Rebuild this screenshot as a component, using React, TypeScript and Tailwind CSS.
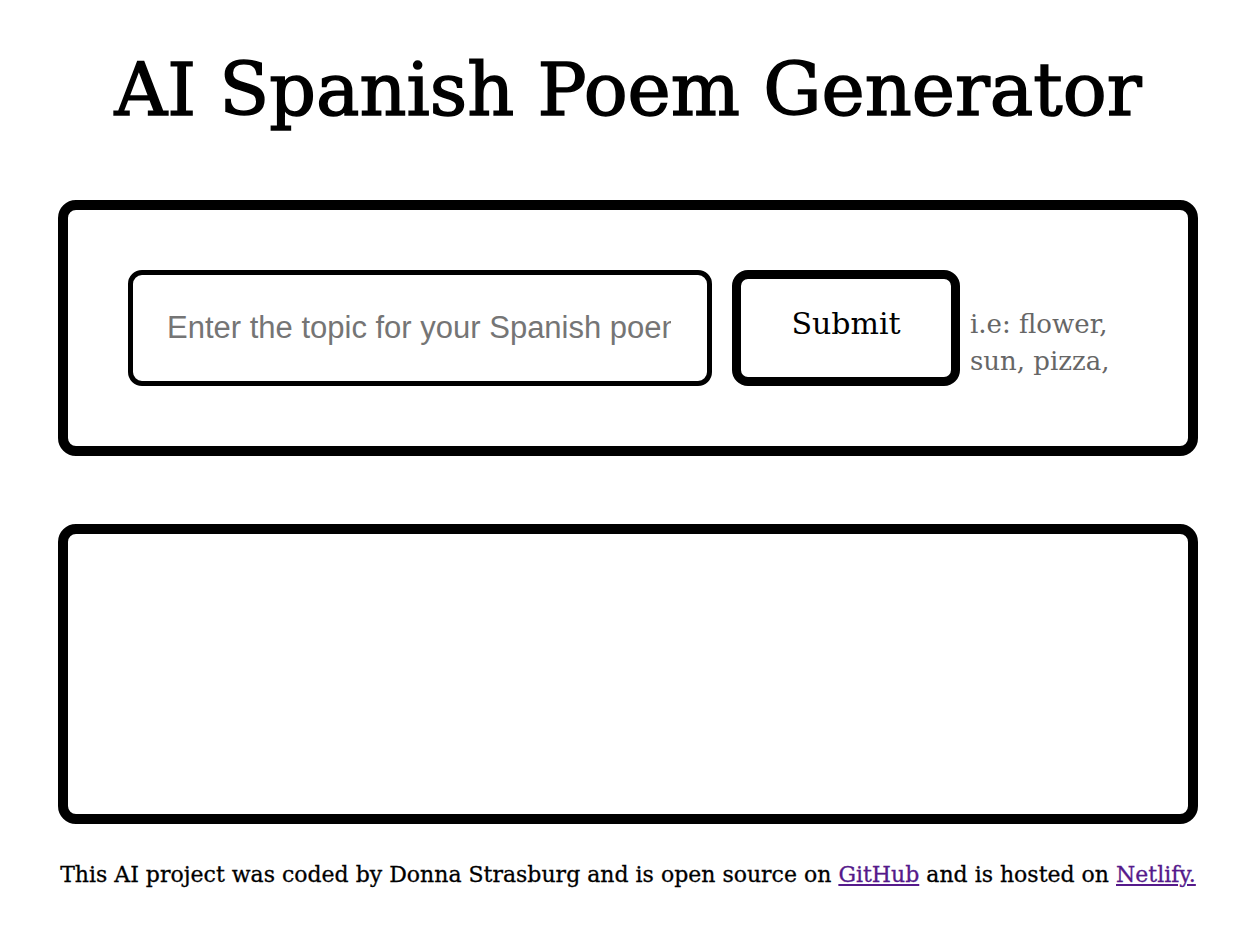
export default function App() {
  return (
    <div className="min-h-screen bg-white pl-[58px] pr-[62px] text-black [font-family:'DejaVu_Serif',serif]">
      <h1 className="pt-[50px] pb-[70px] text-center text-[73px] leading-[80px] font-normal whitespace-nowrap [-webkit-text-stroke:1.5px_black]">
        AI Spanish Poem Generator
      </h1>

      {/* Form */}
      <form
        className="flex h-[256px] items-center rounded-[18px] border-[10px] border-black px-[60px]"
        onSubmit={(e) => e.preventDefault()}
      >
        <input
          type="text"
          placeholder="Enter the topic for your Spanish poem"
          className="h-[116px] w-[584px] shrink-0 rounded-[14px] border-[5px] border-black pl-[34px] pr-[36px] text-[31px] placeholder:text-[#757575] outline-none [font-family:'Liberation_Sans',Arial,sans-serif]"
        />
        <button
          type="submit"
          className="ml-[20px] h-[116px] w-[228px] shrink-0 rounded-[16px] border-[9px] border-black pb-[10px] text-[30px]"
        >
          Submit
        </button>
        <div className="ml-[10px] mt-[30px] w-[158px] text-[26px] leading-[37px] text-[#666]">
          i.e: flower, sun, pizza,
        </div>
      </form>

      {/* Poem output */}
      <div className="mt-[68px] h-[300px] rounded-[18px] border-[10px] border-black" />

      <footer className="mt-[34px] text-center text-[22px] whitespace-nowrap [-webkit-text-stroke:0.3px_black]">
        This AI project was coded by Donna Strasburg and is open source on{" "}
        <a href="#" className="text-[#551a8b] underline [-webkit-text-stroke:0.3px_#551a8b]">
          GitHub
        </a>{" "}
        and is hosted on{" "}
        <a href="#" className="text-[#551a8b] underline [-webkit-text-stroke:0.3px_#551a8b]">
          Netlify.
        </a>
      </footer>
    </div>
  );
}
